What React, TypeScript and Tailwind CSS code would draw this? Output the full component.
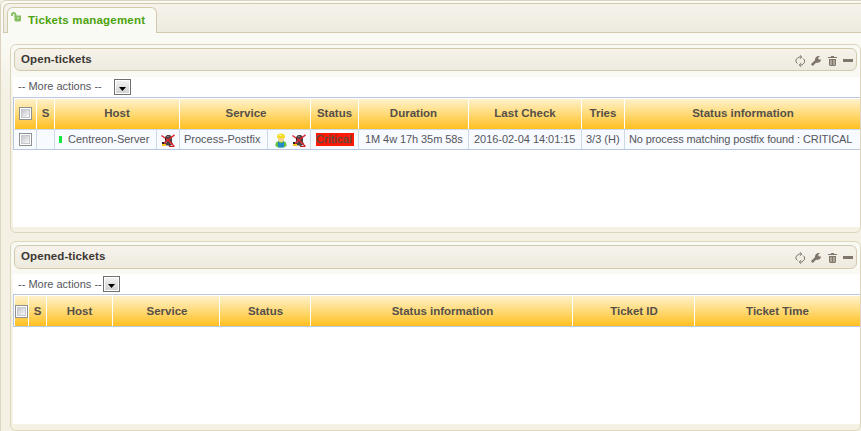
import type { ReactNode } from "react";

const headGradient = "bg-linear-to-b/srgb from-[#fff1cc] via-[#ffda76] via-50% to-[#ffbf20]";

function MutedIcon() {
  return (
    <svg width="14" height="14" viewBox="0 0 14 14" className="block shrink-0">
      <path d="M4 3 L6 1 L9 1 L11 3 V8 L12 10 L9 12 L4 11 L3 9 L4 7 Z" fill="#4b4245" />
      <path d="M6 2h2v1h-2zM5 7h1v2h-1zM9 8h1v2h-1z" fill="#8f8285" />
      <path d="M.5 1.500 L4 4 L8 7 L13.500 12.500 M13.500 .8 L9 4.500 L6 7 L3 9.500" fill="none" stroke="#e0292e" strokeWidth="1.500" />
      <path d="M1 8h2v2H1zM4 4h1v2h-1z" fill="#3a1a1a" />
      <path d="M1 10h4v2H1z" fill="#f5c51c" />
      <path d="M8 12h5v1H8z" fill="#c51d20" />
    </svg>
  );
}

function WorkerIcon() {
  return (
    <svg width="12" height="15" viewBox="0 0 12 15" className="block shrink-0">
      <path d="M.5 13V11Q1 8.500 3.500 8H8.500Q11 8.500 11.500 11V13L9 14.500H3Z" fill="#62c43c" />
      <path d="M3 8.500L6 10.500L9 8.500V13.500L8 14.500H4L3 13.500Z" fill="#2489c8" />
      <path d="M3 4.500H9V7L7.500 9H4.500L3 7Z" fill="#f7d08a" />
      <path d="M2 4Q2 .5 6 .5T10 4V5H2Z" fill="#f4dd20" />
      <path d="M4 2.300h3" stroke="#fff79a" />
    </svg>
  );
}

function Tools() {
  return (
    <svg width="58" height="12" viewBox="0 0 58 12" className="block" fill="none" stroke="#7f776b">
      <path d="M6.500 2H4L1 4.500V7L2.500 8.500M4.800 .2L6.800 2L4.800 3.800M4.500 10H7L9.500 7.500V5L8 3.500M6.200 8.200L4.200 10L6.200 11.800" strokeWidth="1" />
      <path d="M16.800 10.200L22 5" strokeWidth="2.600" />
      <path d="M20 4L21 2L23 1H25L23 3L24 4.500H26V5L25 7L22 8L20 7Z" fill="#7f776b" stroke="none" />
      <path d="M33 2h9v1h-9zM36 1h3v1h-3zM34 4h7v6l-1 1h-5l-1-1z" fill="#7f776b" stroke="none" />
      <path d="M36 5v5M39 5v5" stroke="#e6e1d5" strokeWidth=".9" />
      <path d="M48 4h10v3H48z" fill="#7f776b" stroke="none" />
    </svg>
  );
}

function Check() {
  return (
    <span className="block size-[13px] shrink-0 border border-[#8e8f8f] bg-white p-px">
      <span className="block size-full border border-[#c5c8ce] bg-linear-to-br from-[#c5c7cc] to-[#f8f8f8]" />
    </span>
  );
}

function MoreActions({ label }: { label: string }) {
  return (
    <div className="flex h-[20px] items-start pl-[5px]">
      <span className={`block whitespace-nowrap leading-[15px] ${label}`}>-- More actions --</span>
      <span className="mt-[2px] flex h-4 w-[17px] items-center justify-center border border-[#707070] bg-linear-to-b from-[#f4f4f4] to-[#d0d0d0] ring-1 ring-white ring-inset">
        <svg width="7" height="4" viewBox="0 0 7 4" className="mt-[4px] block">
          <path d="M0 0H7L3.500 4Z" fill="#000" />
        </svg>
      </span>
    </div>
  );
}

function Th({ w, children, last }: { w: string; children?: ReactNode; last?: boolean }) {
  return (
    <div className={`flex h-full shrink-0 items-center justify-center pb-[1px] text-[11.5px] font-bold text-[#55504a] ${last ? "" : "border-r border-white"} ${w}`}>
      {children}
    </div>
  );
}

function Td({ w, children, last }: { w: string; children?: ReactNode; last?: boolean }) {
  return (
    <div className={`flex h-full shrink-0 items-center whitespace-nowrap ${last ? "" : "border-r border-[#ccdaea]"} ${w}`}>
      {children}
    </div>
  );
}

function Widget({ title, box, header, body, children }: { title: string; box: string; header: string; body: string; children: ReactNode }) {
  return (
    <section className={`w-[851px] rounded-[6px] border border-[#ddd6bd] pt-[3px] ${box}`}>
      <header className={`ml-[3px] flex w-[843px] items-center justify-between rounded-[6px] border border-[#d3caae] bg-linear-to-b from-[#f7f3ec] to-[#edeade] pl-[6px] pr-[3px] ${header}`}>
        <h2 className="pb-[1px] text-[11.5px] font-bold tracking-[0.1px] text-[#3c3733]">{title}</h2>
        <div className="pt-[2px]"><Tools /></div>
      </header>
      <div className={`ml-[2px] w-[847px] overflow-hidden bg-white ${body}`}>{children}</div>
    </section>
  );
}

export default function App() {
  return (
    <div className="h-[431px] w-[861px] overflow-hidden bg-[#f5f2e7] font-['Liberation_Sans',Arial,sans-serif] text-[11px] leading-[13px] text-[#55565a]">
      <div className="h-[440px] w-[870px] rounded-tl-[6px] border border-[#dcd4c0] bg-linear-to-b from-[#fafaf5] from-[40px] to-[#f4f1e4] to-[90px] pl-[2px] pt-[2px]">
        <nav className="flex h-[30px] items-end rounded-tl-[6px] border-y border-l border-[#d3caae] bg-linear-to-b from-[#f6f2eb] to-[#edebdf] pl-[3px]">
          <div className="-mb-px flex h-[26px] w-[150px] rounded-t-[6px] border border-b-0 border-[#d3caae] bg-[#fafaf5] pl-[3px]">
            <svg width="11" height="10" viewBox="0 0 11 10" className="mt-[4px] block shrink-0">
              <path d="M1 4V2.500Q1 1 2.500 1T4.500 2.500V5" fill="none" stroke="#86bf60" strokeWidth="1.900" />
              <path d="M3.500 3.500H10v5L9 9.500H4.500L3.500 8.500z" fill="#86bf60" />
              <path d="M6.500 5h1v2h-1z" fill="#e6f2d9" />
            </svg>
            <span className="ml-[6px] whitespace-nowrap pt-[6px] text-[11.5px] font-bold tracking-[0.2px] text-[#4ba30b]">Tickets management</span>
          </div>
        </nav>
        <main className="flex flex-col gap-[8px] pl-[7px] pt-[11px]">
          <Widget title="Open-tickets" box="h-[189px] bg-linear-to-b from-[#fafaf5] from-[30px] to-[#f5f2e4] to-[70px]" header="h-[23px]" body="mt-[6px] h-[150px]">
            <MoreActions label="w-[96px] pt-[2px]" />
            <div className="w-[850px] border border-[#b9c8df]">
              <div className={`ml-px mt-px flex h-[30px] ${headGradient}`}>
                <Th w="w-[22px]"><Check /></Th>
                <Th w="w-[18px]">S</Th>
                <Th w="w-[125px]">Host</Th>
                <Th w="w-[131px] pl-[2px]">Service</Th>
                <Th w="w-[48px]">Status</Th>
                <Th w="w-[110px]">Duration</Th>
                <Th w="w-[113px]">Last Check</Th>
                <Th w="w-[43px]">Tries</Th>
                <Th w="w-[236px]" last>Status information</Th>
              </div>
              <div className="flex h-[20px] border-t border-[#ccdaea] bg-[#f7faff] pl-px">
                <Td w="w-[22px] justify-center pb-px"><Check /></Td>
                <Td w="w-[18px]" />
                <Td w="w-[102px] pb-px pl-[4px]">
                  <span className="mr-[6px] block h-[7px] w-[3px] bg-[#15e83c]" />Centreon-Server
                </Td>
                <Td w="w-[23px] pl-[4px] pt-[3px]"><MutedIcon /></Td>
                <Td w="w-[88px] pb-px pl-[4px]">Process-Postfix</Td>
                <Td w="w-[43px] gap-[5px] pl-[7px] pt-[2px]"><WorkerIcon /><MutedIcon /></Td>
                <Td w="w-[48px] pb-px pl-[5px]"><span className="block h-[13px] w-[38px] bg-[#fb1a08] tracking-[0.3px] text-[#5e4a3c] [-webkit-text-stroke:0.3px_#5e4a3c]">Critical</span></Td>
                <Td w="w-[110px] pb-px pl-[6px] tracking-[-0.08px]">1M 4w 17h 35m 58s</Td>
                <Td w="w-[113px] pb-px pl-[5px] tracking-[-0.04px]">2016-02-04 14:01:15</Td>
                <Td w="w-[43px] pb-px pl-[4px]">3/3 (H)</Td>
                <Td w="w-[236px] pb-px pl-[4px] tracking-[-0.11px]" last>No process matching postfix found : CRITICAL</Td>
              </div>
            </div>
          </Widget>
          <Widget title="Opened-tickets" box="h-[190px] bg-linear-to-b from-[#fafaf5] from-[30px] to-[#f5f2e4] to-[70px]" header="h-[24px]" body="mt-[5px] h-[150px]">
            <MoreActions label="w-[85px] pt-[3px]" />
            <div className="w-[850px] border border-[#b9c8df]">
              <div className={`ml-px mt-px flex h-[30px] ${headGradient}`}>
                <Th w="w-[14px] pt-[1px]"><Check /></Th>
                <Th w="w-[18px] pt-[2px]">S</Th>
                <Th w="w-[66px] pt-[2px]">Host</Th>
                <Th w="w-[107px] pl-[2px] pt-[2px]">Service</Th>
                <Th w="w-[91px] pl-[1px] pt-[2px]">Status</Th>
                <Th w="w-[262px] pl-[2px] pt-[2px]">Status information</Th>
                <Th w="w-[122px] pl-[1px] pt-[2px]">Ticket ID</Th>
                <Th w="w-[166px] pr-[1px] pt-[2px]" last>Ticket Time</Th>
              </div>
            </div>
          </Widget>
        </main>
      </div>
    </div>
  );
}
